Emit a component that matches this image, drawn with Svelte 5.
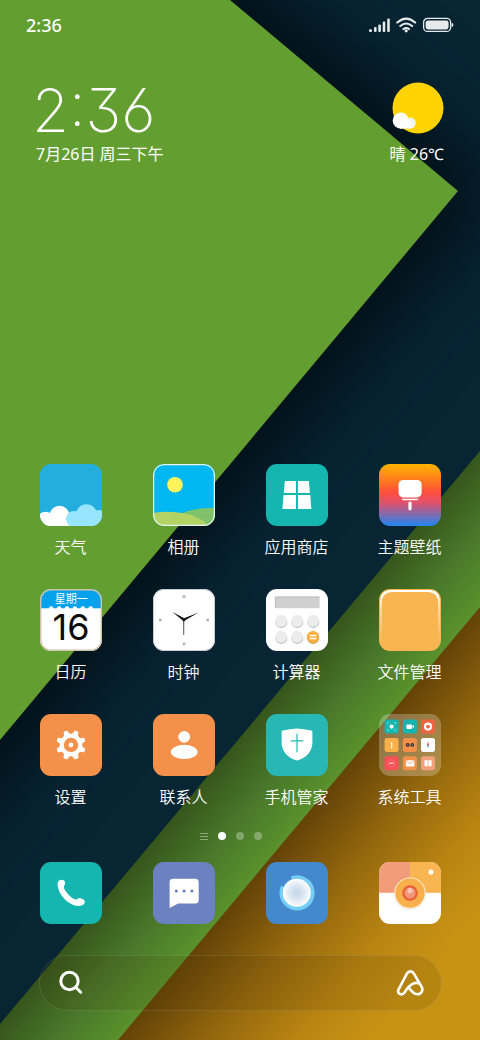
<script>
  const apps = [
    { id: 'weather', name: '天气' },
    { id: 'gallery', name: '相册' },
    { id: 'store', name: '应用商店' },
    { id: 'themes', name: '主题壁纸' },
    { id: 'calendar', name: '日历' },
    { id: 'clock', name: '时钟' },
    { id: 'calculator', name: '计算器' },
    { id: 'files', name: '文件管理' },
    { id: 'settings', name: '设置' },
    { id: 'contacts', name: '联系人' },
    { id: 'security', name: '手机管家' },
    { id: 'folder', name: '系统工具' }
  ];
  const dock = [
    { id: 'phone', name: '电话' },
    { id: 'messages', name: '短信' },
    { id: 'browser', name: '浏览器' },
    { id: 'camera', name: '相机' }
  ];
  const keys = [
    [15, 32], [31, 32], [47, 32], [15, 48], [31, 48]
  ];
  const teeth = [22.5, 67.5, 112.5, 157.5, 202.5, 247.5, 292.5, 337.5];
</script>

{#snippet art(id)}
  <svg class="art" viewBox="0 0 62 62" aria-hidden="true">
    {#if id === 'weather'}
      <rect width="62" height="62" fill="#24aedd" />
      <circle cx="5.5" cy="56" r="8.3" fill="#fff" />
      <circle cx="19.5" cy="51.5" r="9.8" fill="#fff" />
      <rect x="3" y="53" width="30" height="10" fill="#fff" />
      <g fill="#98e5ff">
        <circle cx="34" cy="55" r="8" />
        <circle cx="46.5" cy="51" r="10.7" />
        <circle cx="59" cy="56" r="10" />
        <rect x="34" y="54" width="28" height="9" />
      </g>
    {:else if id === 'gallery'}
      <rect width="62" height="62" fill="#00b7f1" />
      <circle cx="22" cy="20.7" r="7.8" fill="#fff45c" />
      <ellipse cx="60" cy="64" rx="45" ry="20.3" fill="#80c269" />
      <ellipse cx="15" cy="68" rx="42" ry="20.3" fill="#b3d465" />
      <rect x=".6" y=".6" width="60.8" height="60.8" rx="10.4" fill="none" stroke="#e4f4ee" stroke-width="1.3" />
    {:else if id === 'store'}
      <rect width="62" height="62" fill="#15b5b0" />
      <path fill="#fff" d="M19.4 17H30v12H17.8l1-11.4q.1-.6.6-.6zM31.9 17h10.4q.6 0 .6.6l1 11.4h-12zM17.5 31H30v14H16.9q-.5 0-.4-.6zM31.9 31h12.4l1 13.4q0 .6-.4.6h-13z" />
    {:else if id === 'themes'}
      <defs>
        <linearGradient id="themeFill" x1="0" y1="0" x2="0" y2="1">
          <stop offset="0" stop-color="#ffb400" />
          <stop offset=".25" stop-color="#ff7e1c" />
          <stop offset=".45" stop-color="#ff4e3c" />
          <stop offset=".62" stop-color="#e3516b" />
          <stop offset=".82" stop-color="#7e6bb0" />
          <stop offset="1" stop-color="#1e87f5" />
        </linearGradient>
      </defs>
      <rect width="62" height="62" fill="url(#themeFill)" />
      <rect x="19.6" y="16" width="23" height="17.4" rx="4.5" fill="#fff" />
      <path fill="#fff" d="M22.6 34.7h17l-1 1.6h-15z" />
      <rect x="29.4" y="37.6" width="3.2" height="8.8" rx="1.6" fill="#fff" />
    {:else if id === 'calendar'}
      <rect width="62" height="62" fill="#fff" />
      <rect width="62" height="19.3" fill="#06a1ec" />
      {#each [11.2, 19.1, 27, 34.9, 42.8, 50.7] as x}
        <circle cx={x} cy="19.6" r="2.3" fill="#fff" />
      {/each}
      <text x="31.3" y="13.5" text-anchor="middle" font-size="11" fill="#fff">星期一</text>
      <text class="day" x="31" y="50.5" text-anchor="middle" font-size="36" fill="#0a0a0a">16</text>
      <rect x=".7" y=".7" width="60.6" height="60.6" rx="10.3" fill="none" stroke="#cfc3a6" stroke-width="1.4" />
    {:else if id === 'clock'}
      <rect width="62" height="62" fill="#fff" />
      <rect x=".5" y=".5" width="61" height="61" rx="10.5" fill="none" stroke="#c9ccce" />
      <g fill="#b4b4b4">
        <circle cx="31" cy="7.4" r="1.5" /><circle cx="31" cy="54.8" r="1.5" />
        <circle cx="7.3" cy="31" r="1.5" /><circle cx="54.7" cy="31" r="1.5" />
      </g>
      <path fill="#555" d="M30.1 31h1.2l-.1 15h-.9z" />
      <path fill="#111" d="M19.4 23l12.4 6.6-1.4 2.3zM45.6 23.6L31.4 31.8l-1-2.2z" />
      <circle cx="30.8" cy="30.8" r="1.5" fill="#111" />
    {:else if id === 'calculator'}
      <rect width="62" height="62" fill="#fff" />
      <rect x="9" y="7.6" width="44.6" height="11.6" fill="#d0d0d0" />
      <path d="M9.4 19V8h44" fill="none" stroke="#b5b5b5" stroke-width=".8" />
      {#each keys as [x, y]}
        <circle cx={x + 0.2} cy={y + 0.7} r="6.1" fill="#aaa" />
        <circle cx={x} cy={y} r="6.1" fill="#ececec" />
      {/each}
      <circle cx="47.1" cy="48.6" r="6.1" fill="#b98234" />
      <circle cx="47" cy="48" r="6.1" fill="#fbb03f" />
      <path d="M43.7 46.5h6.6M43.7 49.5h6.6" stroke="#fff" stroke-width="1.7" />
    {:else if id === 'files'}
      <defs>
        <linearGradient id="gloss" x1="0" y1="0" x2="0" y2="1">
          <stop offset=".2" stop-color="#fff" />
          <stop offset="1" stop-color="#fff" stop-opacity="0" />
        </linearGradient>
      </defs>
      <rect width="62" height="62" fill="#f9b552" />
      <path d="M1.3 52V12Q1.3 1 12.5 1h37Q60.700 1 60.700 12v40z" fill="url(#gloss)" />
      <path d="M2.6 56V15Q2.600 3 14 3h34Q59.400 3 59.400 15v41z" fill="#f9b552" />
    {:else if id === 'settings'}
      <rect width="62" height="62" fill="#f3914a" />
      <g fill="#fff">
        <circle cx="31" cy="31" r="11.3" />
        {#each teeth as a}
          <path d="M26.6 21.5Q29 20 28.8 16.6Q31 15.2 33.2 16.6Q33 20 35.4 21.5z" transform="rotate({a} 31 31)" />
        {/each}
      </g>
      <circle cx="31" cy="31" r="7.2" fill="#f3914a" />
      <circle cx="31" cy="31" r="2.4" fill="#fff" />
    {:else if id === 'contacts'}
      <rect width="62" height="62" fill="#f3914a" />
      <circle cx="31.2" cy="22.8" r="5.9" fill="#fff" />
      <ellipse cx="31.2" cy="37.9" rx="13.4" ry="7.1" fill="#fff" />
    {:else if id === 'security'}
      <rect width="62" height="62" fill="#27b8b5" />
      <path fill="#fff" d="M31 14.6Q38 15.3 45.4 16.6q1 .2 1 1.2v10.5C46.4 38 40 44 31 46.6 22 44 15.6 38 15.6 28.3V17.8q0-1 1-1.2Q24 15.3 31 14.6z" />
      <path d="M31 19.8v18.4M24.7 26.8h12.6" stroke="#27b8b5" stroke-width="1.2" />
    {:else if id === 'folder'}
      <rect width="62" height="62" fill="#fff" fill-opacity=".25" />
      <g transform="translate(5.6 5.6)">
        <rect width="14" height="14" rx="2.6" fill="#15b5b0" />
        <circle cx="7" cy="7" r="2.1" fill="#fff" />
        <path d="M3 5V3h2M9 3h2v2M11 9v2H9M5 11H3V9" fill="none" stroke="#7fd9d6" stroke-width=".8" />
      </g>
      <g transform="translate(23.9 5.6)">
        <rect width="14" height="14" rx="2.6" fill="#15b5b0" />
        <rect x="3.5" y="5" width="5.6" height="4.3" rx=".8" fill="#fff" /><path d="M9 7l2-1.5v3.2z" fill="#fff" />
      </g>
      <g transform="translate(42 5.6)">
        <rect width="14" height="14" rx="2.6" fill="#ec6541" />
        <circle cx="7" cy="7" r="3" fill="none" stroke="#fff" stroke-width="2.2" />
      </g>
      <g transform="translate(5.6 23.9)">
        <rect width="14" height="14" rx="2.6" fill="#f9b04a" />
        <path d="M7 4v6.5" stroke="#fff3dd" stroke-width="1.3" />
      </g>
      <g transform="translate(23.9 23.9)">
        <rect width="14" height="14" rx="2.6" fill="#f3914a" />
        <circle cx="4.8" cy="7" r="1.9" fill="#333" /><circle cx="9.4" cy="7" r="1.9" fill="#333" />
        <circle cx="4.8" cy="7" r=".6" fill="#aaa" /><circle cx="9.4" cy="7" r=".6" fill="#aaa" />
      </g>
      <g transform="translate(42 23.9)">
        <rect width="14" height="14" rx="2.6" fill="#fff" />
        <path d="M7 3.6L8 7H6z" fill="#ee4b3c" /><path d="M7 10.4L6 7h2z" fill="#4a7fc4" />
      </g>
      <g transform="translate(5.6 42.2)">
        <rect width="14" height="14" rx="2.6" fill="#f95058" />
        <circle cx="7" cy="7" r="3.6" fill="none" stroke="#ff7c80" stroke-width=".6" />
        <path d="M5 7h4" stroke="#fff" stroke-width="1" />
      </g>
      <g transform="translate(23.9 42.2)">
        <rect width="14" height="14" rx="2.6" fill="#f3914a" />
        <rect x="3" y="4" width="8.4" height="6.4" rx=".8" fill="#fff" /><path d="M3.2 4.3l4 3.2 4-3.2" fill="none" stroke="#f3914a" stroke-width=".7" />
      </g>
      <g transform="translate(42 42.2)">
        <rect width="14" height="14" rx="2.6" fill="#f2a07c" />
        <path d="M3.5 4h3.2v6H3.5zM7.4 4h3.2v6H7.4z" fill="#fff" />
      </g>
    {:else if id === 'phone'}
      <rect width="62" height="62" fill="#15b5b0" />
      <path fill="#fff" d="M17.6 21.5c0-3 4.3-5.1 6.6-2.7 1.7 1.8.9 3.7-.1 5.2-.8 1.5 1 5 4.2 8.4 3 3.2 6.3 5.5 8.4 5.1.8-1.1 2.7-1.6 4.7-1.1 3.6.8 4.3 3.8 2.3 5.8-7.8 6.5-26.1-6.2-26.1-20.7z" />
    {:else if id === 'messages'}
      <rect width="62" height="62" fill="#6b81c0" />
      <path fill="#fff" d="M20 16.7h22.2q3.5 0 3.5 3.5V38q0 3.5-3.5 3.5H25.2L16.6 46V20.2q0-3.5 3.4-3.5z" />
      <g fill="#6b81c0"><circle cx="23.3" cy="29" r="1.6" /><circle cx="31.1" cy="29" r="1.6" /><circle cx="38.9" cy="29" r="1.6" /></g>
    {:else if id === 'browser'}
      <defs>
        <radialGradient id="orb">
          <stop offset="0" stop-color="#c3d6e9" />
          <stop offset=".5" stop-color="#dbe6f1" />
          <stop offset=".85" stop-color="#f3f7fb" />
          <stop offset="1" stop-color="#fff" />
        </radialGradient>
      </defs>
      <rect width="62" height="62" fill="#4489cd" />
      <circle cx="31" cy="31" r="14.8" fill="#74cdf5" />
      <path d="M25.5 16.1a15.8 15.8 0 1 1-8.8 8.2" fill="none" stroke="#74cdf5" stroke-width="3.6" />
      <circle cx="30.8" cy="30.8" r="14" fill="url(#orb)" />
    {:else if id === 'camera'}
      <rect width="62" height="62" fill="#fff" />
      <rect width="31" height="30.8" fill="#f29d79" />
      <rect x="31" width="31" height="30.8" fill="#f9b552" />
      <circle cx="31" cy="31.6" r="15.9" fill="#d9cdbf" fill-opacity=".6" />
      <circle cx="31" cy="31" r="15.6" fill="#fff3e2" />
      <circle cx="31" cy="31" r="14.7" fill="#f8b04c" />
      <circle cx="31" cy="31" r="7.8" fill="#eb6038" />
      <circle cx="31" cy="31" r="5.5" fill="#f2977b" />
      <circle cx="31" cy="28.7" r="2.6" fill="#f9c5b2" />
      <circle cx="52" cy="10" r="2.6" fill="#fff" />
    {/if}
  </svg>
{/snippet}

<main class="screen">
  <svg class="wallpaper" viewBox="0 0 480 1040" preserveAspectRatio="none" aria-hidden="true">
    <defs>
      <filter id="soft" x="-50%" y="-50%" width="200%" height="200%" color-interpolation-filters="sRGB">
        <feGaussianBlur stdDeviation="40" />
      </filter>
      <linearGradient id="band" gradientUnits="userSpaceOnUse" x1="240" y1="738" x2="316.8" y2="802">
        <stop offset="0" stop-color="#36561b" />
        <stop offset=".5" stop-color="#48772a" />
        <stop offset="1" stop-color="#5a922c" />
      </linearGradient>
      <linearGradient id="gold" gradientUnits="userSpaceOnUse" x1="240" y1="894" x2="390" y2="1019">
        <stop offset="0" stop-color="#644308" />
        <stop offset=".35" stop-color="#93670d" />
        <stop offset=".7" stop-color="#b98512" />
        <stop offset="1" stop-color="#c89313" />
      </linearGradient>
    </defs>
    <rect width="480" height="1040" fill="#082534" />
    <path d="M-300-483L500 187-300 1147z" fill="#010e15" filter="url(#soft)" />
    <path d="M0 0H230L458 191 0 740z" fill="#639f30" />
    <path d="M480 451V1040H0V1024z" fill="url(#band)" />
    <path d="M480 607V1040H118z" fill="url(#gold)" />
  </svg>

  <header class="status">
    <time class="status-time">2:36</time>
    <svg class="indicators" viewBox="0 0 86 16" width="86" height="16" aria-label="信号 无线网络 电量">
      <g fill="#e6eaeb">
        <rect x="1" y="12.2" width="3" height="2.8" rx="1.2" />
        <rect x="6" y="10" width="2.6" height="5" rx="1" />
        <rect x="10.3" y="7.4" width="2.6" height="7.6" rx="1" />
        <rect x="14.7" y="4.4" width="2.6" height="10.6" rx="1" />
        <rect x="19.2" y="1.4" width="2.6" height="13.6" rx="1" />
      </g>
      <g fill="none" stroke="#e6eaeb" stroke-width="2" stroke-linecap="round">
        <path d="M29.2 5.6q9-8 18 0M32.3 9q5.9-5 11.8 0M35.4 12.1q2.8-2.3 5.6 0" />
      </g>
      <circle cx="38.2" cy="13.8" r="1.6" fill="#e6eaeb" />
      <rect x="55.6" y="1.4" width="27" height="13" rx="4" fill="none" stroke="#e6eaeb" stroke-width="1.3" />
      <rect x="57.6" y="3.4" width="23" height="9" rx="2.3" fill="#e6eaeb" />
      <path d="M83.6 5.8q1.8.4 1.8 2.1t-1.8 2.1z" fill="#e6eaeb" />
    </svg>
  </header>

  <section class="widget">
    <div class="when">
      <time class="big-time">2:36</time>
      <p class="info">7月26日 周三下午</p>
    </div>
    <div class="sky">
      <svg class="sun" viewBox="0 0 52 52" width="52" height="52" aria-hidden="true">
        <circle cx="26" cy="26" r="25.5" fill="#ffd302" />
        <circle cx="18.2" cy="41" r="5.6" fill="#f1f5f7" />
        <rect x="8" y="39" width="11" height="7.6" fill="#fff" />
        <circle cx="8.8" cy="38.6" r="8.1" fill="#fff" />
      </svg>
      <p class="info">晴 26℃</p>
    </div>
  </section>

  <nav class="apps">
    {#each apps as app}
      <button class="app" type="button">
        <span class="tile">{@render art(app.id)}</span>
        <span class="label">{app.name}</span>
      </button>
    {/each}
  </nav>

  <div class="pager" aria-hidden="true">
    <span class="feed"></span>
    <span class="dot current"></span>
    <span class="dot"></span>
    <span class="dot"></span>
  </div>

  <nav class="dock">
    {#each dock as app}
      <button class="app" type="button" aria-label={app.name}>
        <span class="tile">{@render art(app.id)}</span>
      </button>
    {/each}
  </nav>

  <form class="search">
    <button class="tool" type="submit" aria-label="搜索">
      <svg viewBox="0 0 28 28" width="28" height="28" fill="none" stroke="#fff" stroke-width="3" stroke-linecap="round">
        <circle cx="12.5" cy="12" r="8.7" /><path d="M18.8 18.3l4.9 4.9" />
      </svg>
    </button>
    <input class="query" type="search" aria-label="搜索内容" />
    <button class="tool" type="button" aria-label="小爱同学">
      <svg viewBox="0 0 28 28" width="28" height="28" fill="none" stroke="#fff" stroke-width="2.6" stroke-linecap="round" stroke-linejoin="round">
        <path d="M23.6 14.4C21 13.6 18.2 13.8 15.6 15.3 12 17.4 10.8 20.3 8.6 23.4 7.4 25.2 5.4 25.8 3.7 24.8 1.9 23.7 1.7 22.1 2.6 20.4L10.9 4.6C12.5 1.6 16.3 1.6 17.9 4.6L25.5 17.6C27.6 21.4 25.4 25.2 21.4 25.3 17.8 25.4 15.2 22.3 12.7 18.6" />
      </svg>
    </button>
  </form>
</main>

<style>
  :global(body) {
    margin: 0;
  }

  .screen {
    position: relative;
    isolation: isolate;
    display: flex;
    flex-direction: column;
    box-sizing: border-box;
    min-height: 100vh;
    padding: 0 14px 29px;
    overflow: hidden;
    color: #fff;
    font-family: "Noto Sans CJK SC", sans-serif;
  }

  .wallpaper {
    position: absolute;
    z-index: -1;
    inset: 0;
    width: 100%;
    height: 100%;
  }

  .status {
    display: flex;
    align-items: center;
    justify-content: space-between;
    height: 50px;
    padding: 0 12px;
  }

  .status-time {
    font: 500 18px/24px "Noto Sans", sans-serif;
  }

  .indicators {
    display: block;
  }

  .widget {
    display: flex;
    justify-content: space-between;
    padding: 32px 22px 0;
  }

  .when,
  .sky {
    display: flex;
    flex-direction: column;
  }

  .sky {
    align-items: flex-end;
  }

  .big-time {
    height: 60px;
    margin-left: -4px;
    font: 200 60px/56px Inter, sans-serif;
    font-feature-settings: "cv09", "cv03", "ss01";
  }

  .sun {
    display: block;
    height: 52px;
    margin-bottom: 8px;
  }

  .info {
    margin: 0;
    font: 16px/24px "Noto Sans", "Noto Sans CJK SC", sans-serif;
    white-space: nowrap;
  }

  .apps,
  .dock {
    display: grid;
    grid-template-columns: repeat(4, 1fr);
  }

  .apps {
    row-gap: 31px;
    margin-top: auto;
  }

  .app {
    display: flex;
    flex-direction: column;
    align-items: center;
    gap: 8px;
    padding: 0;
    border: 0;
    background: none;
    color: inherit;
    font: inherit;
    cursor: pointer;
  }

  .tile {
    width: 62px;
    height: 62px;
    border-radius: 11px;
    overflow: hidden;
  }

  .art {
    display: block;
    width: 100%;
    height: 100%;
  }

  .day {
    font-family: Inter, sans-serif;
  }

  .label {
    font-size: 16px;
    font-weight: 350;
    line-height: 24px;
    white-space: nowrap;
  }

  .pager {
    display: flex;
    align-items: center;
    justify-content: center;
    gap: 10px;
    margin: 24px 0 22px;
    padding-right: 18px;
  }

  .dot {
    width: 8px;
    height: 8px;
    border-radius: 50%;
    background: #fff;
    opacity: 0.3;
  }

  .dot.current {
    opacity: 1;
  }

  .feed {
    box-sizing: border-box;
    width: 8px;
    height: 7px;
    border: solid #fff;
    border-width: 1px 0;
    background: linear-gradient(#fff, #fff) center / 100% 1px no-repeat;
    opacity: 0.4;
  }

  .search {
    display: flex;
    align-items: center;
    box-sizing: border-box;
    height: 56px;
    margin: 31px 24px 0 25px;
    padding: 0 17px;
    border: 1px solid rgba(255, 255, 255, 0.1);
    border-radius: 28px;
    background: rgba(70, 50, 10, 0.14);
  }

  .tool {
    padding: 0;
    border: 0;
    background: none;
    cursor: pointer;
  }

  .tool svg {
    display: block;
  }

  .query {
    flex: 1;
    min-width: 0;
    border: 0;
    outline: 0;
    background: none;
    color: inherit;
    font: 16px/24px "Noto Sans CJK SC", sans-serif;
  }
</style>
